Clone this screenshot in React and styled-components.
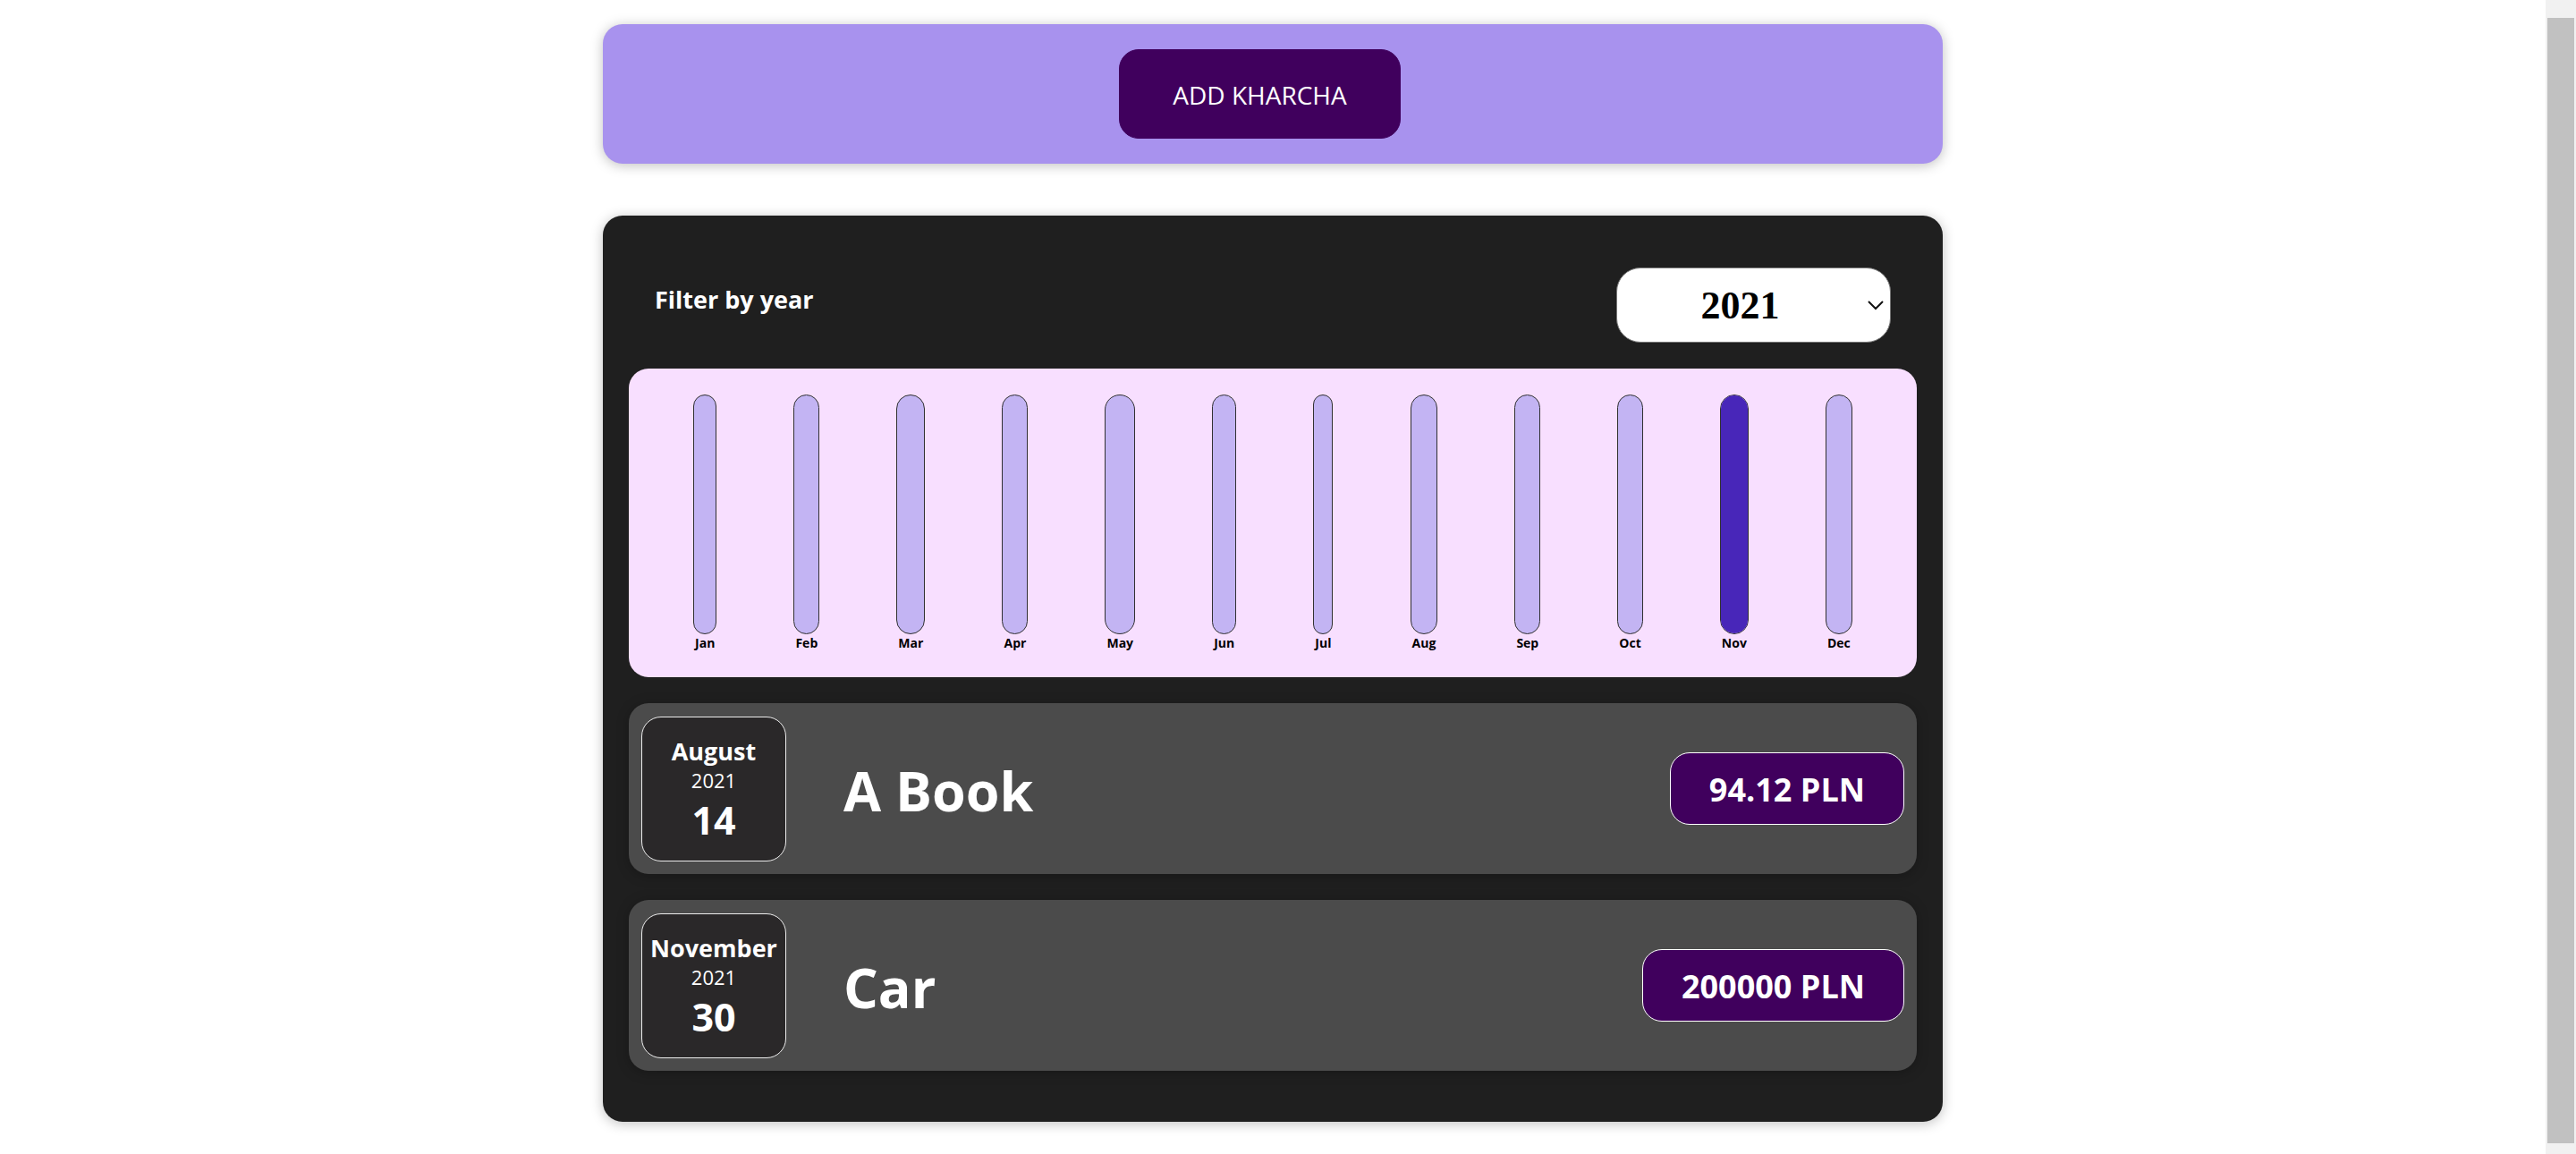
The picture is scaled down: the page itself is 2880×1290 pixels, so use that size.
import React, { useState } from "react";
import styled, { createGlobalStyle } from "styled-components";

const GlobalStyle = createGlobalStyle`
  * {
    box-sizing: border-box;
  }
  body {
    margin: 0;
    background: #ffffff;
    font-family: "Segoe UI", "Open Sans", "Noto Sans", sans-serif;
  }
  h2, p {
    margin: 0;
  }
  ul {
    margin: 0;
    padding: 0;
    list-style: none;
  }
`;

const Page = styled.div`
  display: flex;
  align-items: flex-start;
`;

const Content = styled.main`
  flex: 1;
  min-width: 0;
  display: flex;
  flex-direction: column;
  align-items: center;
  gap: 58px;
  padding: 27px 29px 29px;
`;

const ScrollTrack = styled.div`
  position: sticky;
  top: 0;
  flex: none;
  width: 34px;
  height: 100vh;
  padding: 20px 2px 12px;
  background: #f1f1f1;
`;

const ScrollThumb = styled.div`
  height: 100%;
  background: #c1c1c1;
`;

const Card = styled.section`
  width: 100%;
  max-width: 1498px;
  border-radius: 22px;
  box-shadow: 0 2px 14px rgba(0, 0, 0, 0.25);
`;

const NewExpense = styled(Card)`
  display: flex;
  justify-content: center;
  padding: 28px 29px 28px 0;
  background: #a892ee;
`;

const AddButton = styled.button`
  padding: 30px 59px 28px;
  border: 1px solid #40005d;
  border-radius: 22px;
  background: #40005d;
  color: #ffffff;
  font-family: inherit;
  font-size: 28px;
  line-height: 40px;
  cursor: pointer;
`;

const Expenses = styled(Card)`
  display: flex;
  flex-direction: column;
  gap: 29px;
  padding: 58px 29px 57px;
  background: #1f1f1f;
`;

const Filter = styled.div`
  display: flex;
  align-items: center;
  justify-content: space-between;
  padding: 0 29px;
`;

const FilterLabel = styled.label`
  padding-bottom: 12px;
  color: #ffffff;
  font-size: 27px;
  font-weight: 700;
  line-height: 36px;
`;

const SelectBox = styled.div`
  position: relative;
`;

const YearSelect = styled.select`
  appearance: none;
  display: block;
  width: 307px;
  height: 84px;
  padding: 0 36px 0 6px;
  border: 1px solid #767676;
  border-radius: 27px;
  background: #ffffff;
  color: #000000;
  font-family: "Liberation Serif", "Times New Roman", serif;
  font-size: 44px;
  font-weight: 700;
  text-align: center;
  text-align-last: center;
`;

const Chevron = styled.svg`
  position: absolute;
  top: 36px;
  right: 8px;
  width: 20px;
  height: 12px;
  pointer-events: none;
`;

const Chart = styled.ul`
  display: flex;
  justify-content: space-around;
  padding: 29px;
  border-radius: 22px;
  background: #f8dfff;
`;

const ChartColumn = styled.li`
  display: flex;
  flex-direction: column;
  align-items: center;
`;

const Bar = styled.div`
  display: flex;
  flex-direction: column;
  justify-content: flex-end;
  width: 100%;
  height: 268px;
  overflow: hidden;
  border: 1px solid #313131;
  border-radius: 22px;
  background: #c3b4f3;
`;

const BarFill = styled.div`
  background: #4826b9;
`;

const MonthLabel = styled.span`
  padding: 0 2px;
  color: #000000;
  font-size: 14px;
  font-weight: 700;
  line-height: 19px;
`;

const ExpenseList = styled.ul`
  display: flex;
  flex-direction: column;
  gap: 29px;
`;

const ExpenseRow = styled.li`
  display: flex;
  align-items: center;
  gap: 64px;
  min-height: 191px;
  padding: 14px;
  border-radius: 22px;
  background: #4b4b4b;
  box-shadow: 0 2px 14px rgba(0, 0, 0, 0.25);
`;

const DateBox = styled.time`
  flex: none;
  display: flex;
  flex-direction: column;
  align-items: center;
  justify-content: center;
  width: 162px;
  height: 162px;
  border: 1px solid #ececec;
  border-radius: 22px;
  background: #2a2829;
  color: #ffffff;
`;

const Month = styled.span`
  font-size: 27px;
  font-weight: 700;
  line-height: 36px;
`;

const Year = styled.span`
  font-size: 22px;
  line-height: 28px;
`;

const Day = styled.span`
  margin-top: 6px;
  font-size: 43px;
  font-weight: 700;
  line-height: 50px;
`;

const Title = styled.h2`
  flex: 1;
  padding-top: 4px;
  color: #ffffff;
  font-size: 61px;
  font-weight: 700;
  line-height: 80px;
`;

const Price = styled.p`
  padding: 15px 43px 12px;
  border: 1px solid #ffffff;
  border-radius: 22px;
  background: #40005d;
  color: #ffffff;
  font-size: 36px;
  font-weight: 700;
  line-height: 52px;
`;

const months = [
  { label: "Jan", share: 0 },
  { label: "Feb", share: 0 },
  { label: "Mar", share: 0 },
  { label: "Apr", share: 0 },
  { label: "May", share: 0 },
  { label: "Jun", share: 0 },
  { label: "Jul", share: 0 },
  { label: "Aug", share: 0 },
  { label: "Sep", share: 0 },
  { label: "Oct", share: 0 },
  { label: "Nov", share: 100 },
  { label: "Dec", share: 0 },
];

const expenses = [
  { iso: "2021-08-14", month: "August", year: "2021", day: "14", title: "A Book", price: "94.12 PLN" },
  { iso: "2021-11-30", month: "November", year: "2021", day: "30", title: "Car", price: "200000 PLN" },
];

export default function App() {
  const [year, setYear] = useState("2021");

  return (
    <Page>
      <GlobalStyle />
      <Content>
        <NewExpense>
          <AddButton type="button">ADD KHARCHA</AddButton>
        </NewExpense>
        <Expenses>
          <Filter>
            <FilterLabel htmlFor="year">Filter by year</FilterLabel>
            <SelectBox>
              <YearSelect id="year" value={year} onChange={(e) => setYear(e.target.value)}>
                <option value="2022">2022</option>
                <option value="2021">2021</option>
                <option value="2020">2020</option>
                <option value="2019">2019</option>
              </YearSelect>
              <Chevron viewBox="0 0 20 12" aria-hidden="true">
                <path d="M3 2 L11 10 L19 2" fill="none" stroke="#111111" strokeWidth="2" />
              </Chevron>
            </SelectBox>
          </Filter>
          <Chart>
            {months.map(({ label, share }) => (
              <ChartColumn key={label}>
                <Bar>
                  <BarFill style={{ height: `${share}%` }} />
                </Bar>
                <MonthLabel>{label}</MonthLabel>
              </ChartColumn>
            ))}
          </Chart>
          <ExpenseList>
            {expenses.map((item) => (
              <ExpenseRow key={item.iso}>
                <DateBox dateTime={item.iso}>
                  <Month>{item.month}</Month>
                  <Year>{item.year}</Year>
                  <Day>{item.day}</Day>
                </DateBox>
                <Title>{item.title}</Title>
                <Price>{item.price}</Price>
              </ExpenseRow>
            ))}
          </ExpenseList>
        </Expenses>
      </Content>
      <ScrollTrack aria-hidden="true">
        <ScrollThumb />
      </ScrollTrack>
    </Page>
  );
}
